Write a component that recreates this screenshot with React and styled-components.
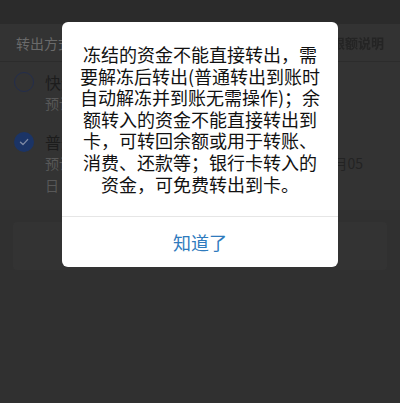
import styled, { createGlobalStyle } from 'styled-components';

const GlobalStyle = createGlobalStyle`
  html, body {
    margin: 0;
    padding: 0;
    background: #303030;
  }
  * {
    box-sizing: border-box;
  }
`;

const Page = styled.div`
  position: relative;
  width: 400px;
  height: 403px;
  overflow: hidden;
  background: #303030;
  font-family: 'Noto Sans CJK SC', 'Noto Sans', sans-serif;
`;

const TopBar = styled.div`
  height: 24px;
  background: #2b2b2b;
`;

const Section = styled.div`
  background: #333333;
  padding-bottom: 14px;
`;

const SectionHeader = styled.div`
  height: 38px;
  padding: 0 16px;
  display: flex;
  align-items: center;
  justify-content: space-between;
  border-bottom: 1px solid #2c2c2c;
`;

const Label = styled.span`
  font-size: 14px;
  color: #6a6a6a;
`;

const HeaderLink = styled.span`
  font-size: 13px;
  font-weight: 700;
  color: #242424;
  filter: blur(0.7px);
`;

const Option = styled.div`
  display: flex;
  align-items: flex-start;
  gap: 11px;
  padding: ${({ $last }) => ($last ? '10px 14px 0' : '10px 14px 8px')};
`;

const Radio = styled.div`
  flex: none;
  width: 20px;
  height: 20px;
  border-radius: 50%;
  display: flex;
  align-items: center;
  justify-content: center;
  border: ${({ $checked }) => ($checked ? 'none' : '1.5px solid #232d4c')};
  background: ${({ $checked }) => ($checked ? '#1b3466' : 'transparent')};
`;

const OptionText = styled.div`
  display: flex;
  flex-direction: column;
`;

const OptionTitle = styled.div`
  font-size: 16px;
  line-height: 20px;
  color: #1c1c1c;
`;

const OptionSub = styled.div`
  font-size: 14px;
  line-height: 22px;
  color: #585858;
  white-space: nowrap;
`;

const Dark = styled.span`
  color: #232323;
`;

const SubmitBar = styled.div`
  margin: 12px 13px 0;
  height: 48px;
  border-radius: 4px;
  background: #333333;
`;

const Dialog = styled.div`
  position: absolute;
  top: 22px;
  left: 62px;
  width: 276px;
  background: #ffffff;
  border-radius: 6px;
  overflow: hidden;
`;

const Message = styled.p`
  margin: 0;
  padding: 22px 15px 21px;
  font-size: 18px;
  line-height: 21.6px;
  color: #111111;
  text-align: center;
`;

const Actions = styled.div`
  border-top: 1px solid #e6e6e6;
  height: 51px;
  display: flex;
`;

const ActionButton = styled.button`
  flex: 1;
  border: none;
  background: transparent;
  font-family: inherit;
  font-size: 18px;
  color: #2f7bbd;
  padding: 0;
  cursor: pointer;
`;

function CheckIcon() {
  return (
    <svg width="12" height="12" viewBox="0 0 12 12" fill="none">
      <path d="M2.5 6.2 L5 8.6 L9.6 3.6" stroke="#7d88a3" strokeWidth="1.4" strokeLinecap="round" strokeLinejoin="round" />
    </svg>
  );
}

const lines = [
  '冻结的资金不能直接转出，需',
  '要解冻后转出(普通转出到账时',
  '自动解冻并到账无需操作)；余',
  '额转入的资金不能直接转出到',
  '卡，可转回余额或用于转账、',
  '消费、还款等；银行卡转入的',
  '资金，可免费转出到卡。',
];

export default function App() {
  return (
    <>
      <GlobalStyle />
      <Page>
        <TopBar />
        <Section>
          <SectionHeader>
            <Label>转出方式</Label>
            <HeaderLink>限额说明</HeaderLink>
          </SectionHeader>
          <Option>
            <Radio />
            <OptionText>
              <OptionTitle>快速转出</OptionTitle>
              <OptionSub>预计2小时内到账，单日限额5万元</OptionSub>
            </OptionText>
          </Option>
          <Option $last>
            <Radio $checked>
              <CheckIcon />
            </Radio>
            <OptionText>
              <OptionTitle>普通转出</OptionTitle>
              <OptionSub>
                预计明日24:00前到账，节假日顺延，最晚于1<Dark>0月05</Dark>
              </OptionSub>
              <OptionSub>日 24:00 前到账</OptionSub>
            </OptionText>
          </Option>
        </Section>
        <SubmitBar />

        <Dialog>
          <Message>
            {lines.map((line, i) => (
              <span key={i}>
                {line}
                {i < lines.length - 1 && <br />}
              </span>
            ))}
          </Message>
          <Actions>
            <ActionButton>知道了</ActionButton>
          </Actions>
        </Dialog>
      </Page>
    </>
  );
}
